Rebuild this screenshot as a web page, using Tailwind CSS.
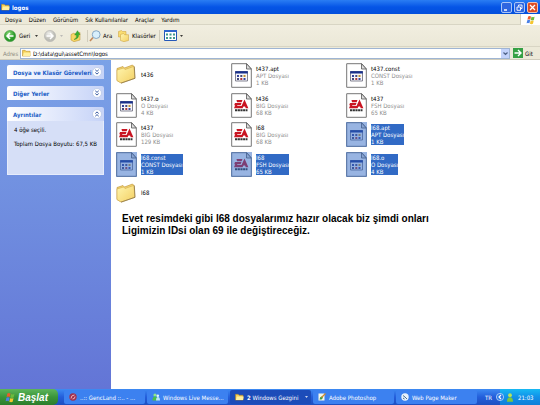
<!DOCTYPE html>
<html lang="tr">
<head>
<meta charset="utf-8">
<title>logos</title>
<script src="https://cdn.jsdelivr.net/npm/@tailwindcss/browser@4"></script>
</head>
<body class="flex h-screen flex-col overflow-hidden bg-white font-['DejaVu_Sans_Condensed','DejaVu_Sans',sans-serif] text-[6px] leading-[7px] text-black">
<svg class="absolute size-0" aria-hidden="true">
  <defs>
    <linearGradient id="gold" x1="0" y1="0" x2="1" y2="1"><stop offset="0" stop-color="#fff6b0"/><stop offset="1" stop-color="#f3cf62"/></linearGradient>
    <radialGradient id="green" cx=".4" cy=".3"><stop offset="0" stop-color="#8ede7c"/><stop offset="1" stop-color="#2b9a2b"/></radialGradient>
    <radialGradient id="grey" cx=".4" cy=".3"><stop offset="0" stop-color="#efefeb"/><stop offset="1" stop-color="#bdbdb6"/></radialGradient>
  </defs>
  <symbol id="folder" viewBox="0 0 20 20">
    <path d="M1 4.500 7 2.500l1.500 1.500 8-3 1 1v12l-13 4.500-3.500-2z" fill="#f3d673" stroke="#b98c2b" stroke-width=".6"/>
    <path d="m1 6 6.500-2L9 5.500l9-3.200.8 12L5 19 1 16.500z" fill="url(#gold)" stroke="#d0a848" stroke-width=".6"/>
    <path d="M18.300 2.500 19 14.300 5 19.200" fill="none" stroke="#8c7440" stroke-width=".8"/>
  </symbol>
  <symbol id="smallfolder" viewBox="0 0 10 9">
    <path d="M.5 8V1.500h3L4.500 2.500H9V8z" fill="#f5cf54" stroke="#b18522" stroke-width=".6"/>
    <path d="M1 8 2 4h7.700L9 8z" fill="#fff0a0"/>
  </symbol>
  <symbol id="page" viewBox="0 0 21 25">
    <path d="M.7.700h15L20.300 6v18.300H.7z" fill="#fff" stroke="#777" stroke-width="1"/>
    <path d="M15.500.700V6h4.800z" fill="#ddd" stroke="#555" stroke-width=".8"/>
  </symbol>
  <symbol id="app" viewBox="0 0 21 25">
    <use href="#page"/>
    <path d="M4.500 8.500h12v9.500h-12z" fill="#f6f6fa" stroke="#667" stroke-width=".8"/>
    <path d="M4.200 8.200h12.600v2.300H4.200z" fill="#18308c"/>
    <path d="M6 12h2v2H6zm6.500 3h2v2h-2z" fill="#35439c"/><path d="M9.300 12h2v2h-2zM6 15h2v2H6z" fill="#43497a"/><path d="M12.500 12h2v2h-2z" fill="#c2932b"/><path d="M9.300 15h2v2h-2z" fill="#b03838"/>
  </symbol>
  <symbol id="ea" viewBox="0 0 21 25">
    <use href="#page"/>
    <path d="M5.500 7h6l-.9 2.200H6zM4 10h6.500l-.9 2.200H6.500l-.5.900h4.500L13.500 6.500l3.900 8.700h-2.600l-.8-1.700h-1.500l-1 1.700H3L4.200 12.200H3.200z" fill="#c91522"/>
    <path d="M4 17.300h12.500" stroke="#333" stroke-width="2" stroke-dasharray="2.200 .5"/>
  </symbol>
  <symbol id="flag" viewBox="0 0 14 14">
    <path d="M3 2q2-1.300 4 0L6 6.500q-2-1.300-4 0z" fill="#ee5a2b"/><path d="M7.700 2.500q2 1.200 4.300 0L11 7q-2 1.200-4.300 0z" fill="#6dba3d"/>
    <path d="M1.800 7.200q2-1.300 4 0l-1 4.500q-2-1.300-4 0z" fill="#4a80e6"/><path d="M6.500 7.800q2 1.200 4.300 0l-1 4.500q-2 1.200-4.300 0z" fill="#f6c52e"/>
  </symbol>
  <symbol id="chev" viewBox="0 0 10 10">
    <circle cx="5" cy="5" r="4.500" fill="#fff" stroke="#b5c4e4" stroke-width=".7"/>
    <path d="m3.300 2.800 1.700 1.600 1.700-1.600M3.300 5.500 5 7.100l1.700-1.600" fill="none" stroke="#34579f" stroke-width="1"/>
  </symbol>
</svg>

<header class="flex h-[14px] shrink-0 items-center bg-linear-to-b from-[#2a7df3] via-[#0554e6] to-[#0350dc] pr-[2px] pl-[1px] text-white">
  <svg class="h-2 w-[9px]"><use href="#smallfolder"/></svg>
  <h1 class="ml-[2px] grow font-bold">logos</h1>
  <div class="flex gap-[2px]">
    <button aria-label="Simge durumuna küçült" class="size-[11px] rounded-[2px] border border-[#a9c5f7] bg-[#2f66e0]"><svg viewBox="0 0 9 9"><path d="M2 7h3" stroke="#fff" stroke-width="1.500"/></svg></button>
    <button aria-label="Önceki boyut" class="size-[11px] rounded-[2px] border border-[#a9c5f7] bg-[#2f66e0]"><svg viewBox="0 0 9 9"><path d="M3.500 3.500V2H7v3.500H5.500M2 4h3.500v3.300H2z" fill="none" stroke="#fff" stroke-width=".9"/></svg></button>
    <button aria-label="Kapat" class="size-[11px] rounded-[2px] border border-[#f0c0b0] bg-[#dc4e27]"><svg viewBox="0 0 9 9"><path d="m2 2 5 5m0-5L2 7" stroke="#fff" stroke-width="1.300"/></svg></button>
  </div>
</header>

<nav class="flex h-[11px] shrink-0 items-stretch bg-[#ece9d8]">
  <div class="flex grow items-center gap-[7px] border-b border-[#d8d5c4] pl-[5px]">
    <button>Dosya</button><button>Düzen</button><button>Görünüm</button><button>Sık Kullanılanlar</button><button>Araçlar</button><button>Yardım</button>
  </div>
  <div class="flex w-5 items-center justify-center border-l border-[#d0cdbd] bg-white"><svg class="size-[10px]"><use href="#flag"/></svg></div>
</nav>

<div class="flex h-[22px] shrink-0 items-center border-b border-[#d8d5c4] bg-linear-to-b from-[#f1eee0] to-[#ebe8d7] pl-1">
  <button class="flex w-10 items-center gap-[3px]"><svg class="size-3" viewBox="0 0 12 12"><circle cx="6" cy="6" r="5.600" fill="url(#green)" stroke="#2c8a2c" stroke-width=".5"/><path d="M9.500 6H3m3-3L3 6l3 3" fill="none" stroke="#fff" stroke-width="1.500"/></svg>Geri<svg class="ml-[2px] h-[2px] w-[3px]" viewBox="0 0 4 2"><path d="M0 0h4L2 2z"/></svg></button>
  <button aria-label="İleri" class="flex w-[26px] items-center gap-1"><svg class="size-3" viewBox="0 0 12 12"><circle cx="6" cy="6" r="5.600" fill="url(#grey)" stroke="#aaa" stroke-width=".5"/><path d="M2.500 6H9M6 3l3 3-3 3" fill="none" stroke="#fff" stroke-width="1.500"/></svg><svg class="h-[2px] w-[3px]" viewBox="0 0 4 2"><path d="M0 0h4L2 2z" fill="#aaa"/></svg></button>
  <button aria-label="Yukarı" class="w-[17px]"><svg class="h-3 w-[11px]" viewBox="0 0 11 12"><path d="M1 4.500 4 3l1 1 5-1.500V10l-6 1.700L1 10z" fill="#f6d766" stroke="#b98c2b" stroke-width=".5"/><path d="M4 9.500q3-1 2.500-4.500H4.700L7.500.700 10 4.600H8.500Q9 9 4 9.500z" fill="#37b12f" stroke="#1e8220" stroke-width=".4"/></svg></button>
  <button class="flex w-[28px] items-center gap-[2px] border-l border-[#d0cdbd] pl-[1px]"><svg class="h-3 w-3 shrink-0" viewBox="0 0 12 12"><path d="M4 7.500 1 11" stroke="#c5895a" stroke-width="1.600"/><circle cx="7.200" cy="4.600" r="3.900" fill="#d8effc" stroke="#7c9fc0" stroke-width=".9"/></svg>Ara</button>
  <button class="flex w-[44px] items-center gap-[3px] pl-[3px]"><svg class="h-3 w-[11px] shrink-0" viewBox="0 0 11 12"><path d="M.5 7V1.500l3-1 1 1H8V7z" fill="#f9dc70" stroke="#c89c38" stroke-width=".5"/><path d="M2.500 10.500v-6l3-1 1 1.200h4v5.800L6 11.700z" fill="url(#gold)" stroke="#c89c38" stroke-width=".5"/></svg>Klasörler</button>
  <button aria-label="Görünümler" class="flex items-center gap-[3px] border-l border-[#d0cdbd] pl-1"><svg class="h-[11px] w-[13px]" viewBox="0 0 13 11"><path d="M.5.500h12v10H.5z" fill="#fff" stroke="#2558b8"/><path d="M0 0h13v2H0z" fill="#2e66cc"/><path d="M2 3.500h2v2H2zm3.500 0h2v2h-2zM9 3.500h2v2H9zM2 7h2v2H2zm3.500 0h2v2h-2zM9 7h2v2H9z" fill="#3f9a8a"/></svg><svg class="h-[2px] w-[3px]" viewBox="0 0 4 2"><path d="M0 0h4L2 2z"/></svg></button>
</div>

<form class="flex h-[13px] shrink-0 items-center border-b border-[#d0cdbd] bg-[#ece9d8] pl-[3px]">
  <label for="adr" class="w-[17px] text-[#8d8b80]">Adres</label>
  <div class="flex h-[11px] grow items-center gap-[2px] border border-[#9fb5d3] bg-white pl-[1px]">
    <svg class="h-2 w-[9px]"><use href="#smallfolder"/></svg>
    <input id="adr" class="h-2 min-w-0 grow outline-none" value="D:\data\gui\assetCmn\logos">
    <button type="button" aria-label="Adres listesi" class="flex h-[9px] w-2 items-center justify-center bg-[#c3d3fb]"><svg class="size-[5px]" viewBox="0 0 5 5"><path d="m.5 1.500 2 2 2-2" fill="none" stroke="#4d6185" stroke-width="1.200"/></svg></button>
  </div>
  <button type="button" class="flex w-[30px] items-center gap-[2px] pl-[3px]"><svg class="size-[10px]" viewBox="0 0 10 10"><path d="M0 0h10v10H0z" fill="#35a044"/><path d="M1.500 5H8M5 2l3 3-3 3" fill="none" stroke="#fff" stroke-width="1.400"/></svg>Git</button>
</form>

<div class="flex min-h-0 grow">
  <aside class="flex w-[111px] shrink-0 flex-col gap-[7px] bg-linear-to-b from-[#7ba2e7] to-[#6375d6] pt-[5px] pr-[7px] pl-[7px]">
    <button class="flex h-[14px] items-center justify-between rounded-t-[2px] bg-linear-to-r from-white to-[#c6d3f7] pr-[2px] pl-[6px] font-bold whitespace-nowrap text-[#215dc6]">Dosya ve Klasör Görevleri<svg class="size-[10px] shrink-0"><use href="#chev"/></svg></button>
    <button class="flex h-[14px] items-center justify-between rounded-t-[2px] bg-linear-to-r from-white to-[#c6d3f7] pr-[2px] pl-[6px] font-bold text-[#215dc6]">Diğer Yerler<svg class="size-[10px] shrink-0"><use href="#chev"/></svg></button>
    <section>
      <button class="flex h-[14px] w-full items-center justify-between rounded-t-[2px] bg-linear-to-r from-white to-[#c6d3f7] pr-[2px] pl-[6px] font-bold text-[#215dc6]">Ayrıntılar<svg class="size-[10px] shrink-0 rotate-180"><use href="#chev"/></svg></button>
      <div class="flex flex-col gap-[7px] border border-t-0 border-[#e6ecfb] bg-[#d6dff7] pt-[5px] pr-1 pb-[27px] pl-[6px] whitespace-nowrap"><p>4 öğe seçili.</p><p>Toplam Dosya Boyutu: 67,5 KB</p></div>
    </section>
  </aside>

  <main class="min-w-0 grow pt-[1px] pl-[5px]">
    <ul id="files" class="grid h-[148px] grid-cols-[repeat(auto-fill,115px)] grid-rows-5"></ul>
    <p class="mt-1 ml-[6px] font-['Liberation_Sans',Arial,sans-serif] text-[10px] leading-3 font-bold">Evet resimdeki gibi l68 dosyalarımız hazır olacak biz şimdi onları<br>Ligimizin IDsi olan 69 ile değiştireceğiz.</p>
  </main>
</div>

<footer class="flex h-4 shrink-0 items-stretch bg-linear-to-b from-[#3f8bf3] via-[#245edb] to-[#1d4fc0] text-white">
  <button class="mr-[6px] flex w-[58px] items-center gap-[2px] rounded-r-[5px] bg-linear-to-b from-[#5db55a] via-[#3a953a] to-[#2c7d2c] pl-[5px] font-['Liberation_Sans',Arial,sans-serif] text-[10px] font-bold italic"><svg class="size-[11px]"><use href="#flag"/></svg>Başlat</button>
  <div class="grid grow grid-cols-5 gap-[2px] py-[1px]">
    <button class="flex items-center gap-[3px] rounded-[2px] bg-[#3c81f0] pl-[5px] whitespace-nowrap"><svg class="size-2" viewBox="0 0 8 8"><circle cx="4" cy="4" r="3.700" fill="#a03050"/><path d="M2 5.500Q2 2 5.500 2M3.500 6Q6 6 6 3.500" stroke="#f0b0b8" fill="none"/></svg>..:: GencLand ::.. - ...</button>
    <button class="flex items-center gap-[3px] rounded-[2px] bg-[#3c81f0] pl-[5px] whitespace-nowrap"><svg class="size-2" viewBox="0 0 8 8"><circle cx="3" cy="2" r="1.600" fill="#8fe58a"/><path d="M.5 7.500q0-4 2.500-4t2.500 4z" fill="#49bf4b"/><circle cx="5.800" cy="2.700" r="1.300" fill="#e4f6ff"/><path d="M4 7.500q0-3.500 2-3.500t2 3.500z" fill="#b9e4f7"/></svg>Windows Live Messe...</button>
    <button class="flex items-center gap-[3px] rounded-[2px] bg-[#1c4cb9] pr-[3px] pl-[5px] whitespace-nowrap"><svg class="h-2 w-[9px]"><use href="#smallfolder"/></svg><span class="grow text-left"><b>2</b> Windows Gezgini</span><svg class="h-[2px] w-[3px]" viewBox="0 0 4 2"><path d="M0 0h4L2 2z" fill="#fff"/></svg></button>
    <button class="flex items-center gap-[3px] rounded-[2px] bg-[#3c81f0] pl-[5px] whitespace-nowrap"><svg class="size-2" viewBox="0 0 8 8"><path d="M.5.500h6v7h-6z" fill="#f5f8ec"/><path d="M1.500 6.500Q2 3 4 3.500t-.5 3z" fill="#3e9c4c"/><path d="m3.500 4.500 4-4" stroke="#d38a2a" stroke-width="1.200"/></svg>Adobe Photoshop</button>
    <button class="flex items-center gap-[3px] rounded-[2px] bg-[#3c81f0] pl-[5px] whitespace-nowrap"><svg class="size-2" viewBox="0 0 8 8"><circle cx="4" cy="4" r="3.700" fill="#e9f2fb"/><path d="M2 2.500 4 4l2 2M2 5l1.500 1" stroke="#4b6e8f" fill="none"/></svg>Web Page Maker</button>
  </div>
  <span class="flex w-[23px] items-center justify-center">TR</span>
  <div class="flex w-10 items-center bg-linear-to-b from-[#19b9f3] via-[#1290e8] to-[#0f7fd8]">
    <button aria-label="Gizli simgeleri göster" class="-ml-1 shrink-0"><svg class="size-2" viewBox="0 0 8 8"><circle cx="4" cy="4" r="3.600" fill="#2a7be8" stroke="#d5e9fc" stroke-width=".7"/><path d="M5 2 3 4l2 2" fill="none" stroke="#fff" stroke-width="1.200"/></svg></button>
    <svg class="ml-[3px] h-[9px] w-[6px] shrink-0" viewBox="0 0 6 9"><circle cx="3" cy="2.200" r="1.900" fill="#b9e45a"/><path d="M0 8.700Q0 4.200 3 4.200t3 4.500z" fill="#7cc83d"/></svg>
    <time class="ml-[5px]">21:03</time>
  </div>
</footer>

<script>
const files = [
  ['folder', 't436'], ['app', 't437.apt', 'APT Dosyası', '1 KB'], ['app', 't437.const', 'CONST Dosyası', '1 KB'],
  ['app', 't437.o', 'O Dosyası', '4 KB'], ['ea', 't436', 'BIG Dosyası', '68 KB'], ['ea', 't437', 'FSH Dosyası', '65 KB'],
  ['ea', 't437', 'BIG Dosyası', '129 KB'], ['ea', 'l68', 'BIG Dosyası', '68 KB'], ['app', 'l68.apt', 'APT Dosyası', '1 KB', true],
  ['app', 'l68.const', 'CONST Dosyası', '1 KB', true], ['ea', 'l68', 'FSH Dosyası', '65 KB', true], ['app', 'l68.o', 'O Dosyası', '4 KB', true],
  ['folder', 'l68']
];
document.getElementById('files').innerHTML = files.map(([icon, name, type, size, selected]) => `
  <li class="flex items-center gap-1 ${icon === 'folder' ? 'pb-[3px]' : ''}">
    <span class="relative h-[25px] w-[21px] shrink-0 flex items-center">
      <svg class="${icon === 'folder' ? 'h-5 w-5' : 'h-[25px] w-[21px]'}"><use href="#${icon}"/></svg>
      ${selected ? '<span class="absolute inset-0 bg-[#316ac5]/50"></span>' : ''}
    </span>
    <div class="whitespace-nowrap ${selected ? 'bg-[#316ac5] text-white' : ''}">
      <p>${name}</p>${type ? `<p class="${selected ? '' : 'text-[#8c8c8c]'}">${type}</p><p class="${selected ? '' : 'text-[#8c8c8c]'}">${size}</p>` : ''}
    </div>
  </li>`).join('');
</script>
</body>
</html>
